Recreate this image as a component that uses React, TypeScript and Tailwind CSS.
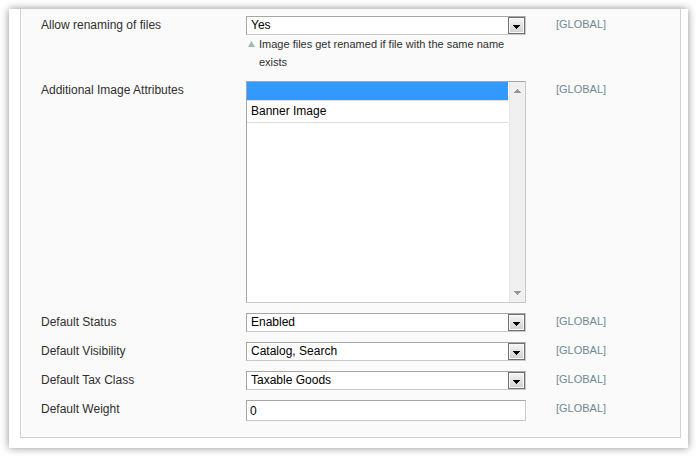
import type { ReactNode } from "react";

const border =
  "border border-t-[#a6a6a6] border-l-[#a6a6a6] border-b-[#c8c8c8] border-r-[#c8c8c8]";

function Row({ id, label, children }: { id: string; label: string; children: ReactNode }) {
  return (
    <div className="flex items-start">
      <label htmlFor={id} className="w-[205px] shrink-0 text-[12px] leading-[19px] text-[#2f2f2f]">
        {label}
      </label>
      <div className="w-[280px] shrink-0">{children}</div>
      <span className="ml-[30px] text-[11px] leading-[17px] text-[#6f8992]">[GLOBAL]</span>
    </div>
  );
}

function Dropdown({ id, options }: { id: string; options: string[] }) {
  return (
    <div className="relative">
      <select
        id={id}
        className={`block h-[19px] w-full appearance-none rounded-none bg-white pl-1 pr-5 text-[12px] leading-[17px] text-black outline-none ${border}`}
      >
        {options.map((option) => (
          <option key={option}>{option}</option>
        ))}
      </select>
      <span className="pointer-events-none absolute right-px top-px flex size-[17px] items-center justify-center border border-[#707070] bg-linear-to-b from-[#f6f6f6] to-[#cfcfcf] shadow-[inset_0_0_0_1px_#f8f8f8]">
        <svg width="7" height="4" viewBox="0 0 7 4" shapeRendering="crispEdges" className="mt-[3px]">
          <path d="M0 0H7V1H6V2H5V3H4V4H3V3H2V2H1V1H0Z" fill="#000" />
        </svg>
      </span>
    </div>
  );
}

export default function App() {
  return (
    <div className="bg-white p-2 pl-[9px] pt-[9px] font-['Liberation_Sans',Arial,sans-serif]">
      <div className="bg-white px-[11px] pr-[7px] pb-[10px] shadow-[0_0_8px_rgba(0,0,0,0.45)]">
        <form
          className="flex flex-col gap-[10px] border border-t-0 border-[#d2d2d2] bg-[#fafafa] pb-4 pl-5 pt-[7px]"
          onSubmit={(event) => event.preventDefault()}
        >
          <Row id="rename" label="Allow renaming of files">
            <Dropdown id="rename" options={["Yes", "No"]} />
            <p className="flex text-[11px] leading-[18px] text-[#2f2f2f]">
              <svg width="7" height="6" viewBox="0 0 7 6" className="ml-[2px] mr-1 mt-[6px] shrink-0">
                <path d="M3.5 0L7 6H0Z" fill="#a3b5b9" />
              </svg>
              <span>Image files get renamed if file with the same name exists</span>
            </p>
          </Row>

          <Row id="attributes" label="Additional Image Attributes">
            <div className={`flex h-[222px] bg-white ${border}`}>
              <select
                id="attributes"
                multiple
                defaultValue={["none"]}
                className="h-full min-w-0 flex-1 appearance-none overflow-hidden rounded-none bg-white p-0 text-[12px] text-black outline-none"
              >
                <option
                  value="none"
                  aria-label="None"
                  className="h-[19px] min-h-[19px] border-b border-[#dddddd] p-0 checked:bg-[#3399ff] checked:bg-linear-to-r checked:from-[#3399ff] checked:to-[#3399ff]"
                />
                <option
                  value="banner"
                  className="h-[22px] border-b border-[#dddddd] px-1 pt-[3px] pb-0"
                >
                  Banner Image
                </option>
              </select>
              <div className="ml-px flex w-4 flex-col items-center justify-between border-l border-[#e6e6e6] bg-[#f0f0f0] py-[7px]">
                <svg width="7" height="4" viewBox="0 0 7 4" shapeRendering="crispEdges">
                  <path d="M3 0H4V1H5V2H6V3H7V4H0V3H1V2H2V1H3Z" fill="#969696" />
                </svg>
                <svg width="7" height="4" viewBox="0 0 7 4" shapeRendering="crispEdges">
                  <path d="M0 0H7V1H6V2H5V3H4V4H3V3H2V2H1V1H0Z" fill="#969696" />
                </svg>
              </div>
            </div>
          </Row>

          <Row id="status" label="Default Status">
            <Dropdown id="status" options={["Enabled", "Disabled"]} />
          </Row>
          <Row id="visibility" label="Default Visibility">
            <Dropdown id="visibility" options={["Catalog, Search", "Catalog", "Search"]} />
          </Row>
          <Row id="tax" label="Default Tax Class">
            <Dropdown id="tax" options={["Taxable Goods", "None"]} />
          </Row>
          <Row id="weight" label="Default Weight">
            <input
              id="weight"
              type="text"
              defaultValue="0"
              className={`block h-[21px] w-full bg-white px-[3px] text-[12px] leading-[17px] text-black outline-none ${border}`}
            />
          </Row>
        </form>
      </div>
    </div>
  );
}
